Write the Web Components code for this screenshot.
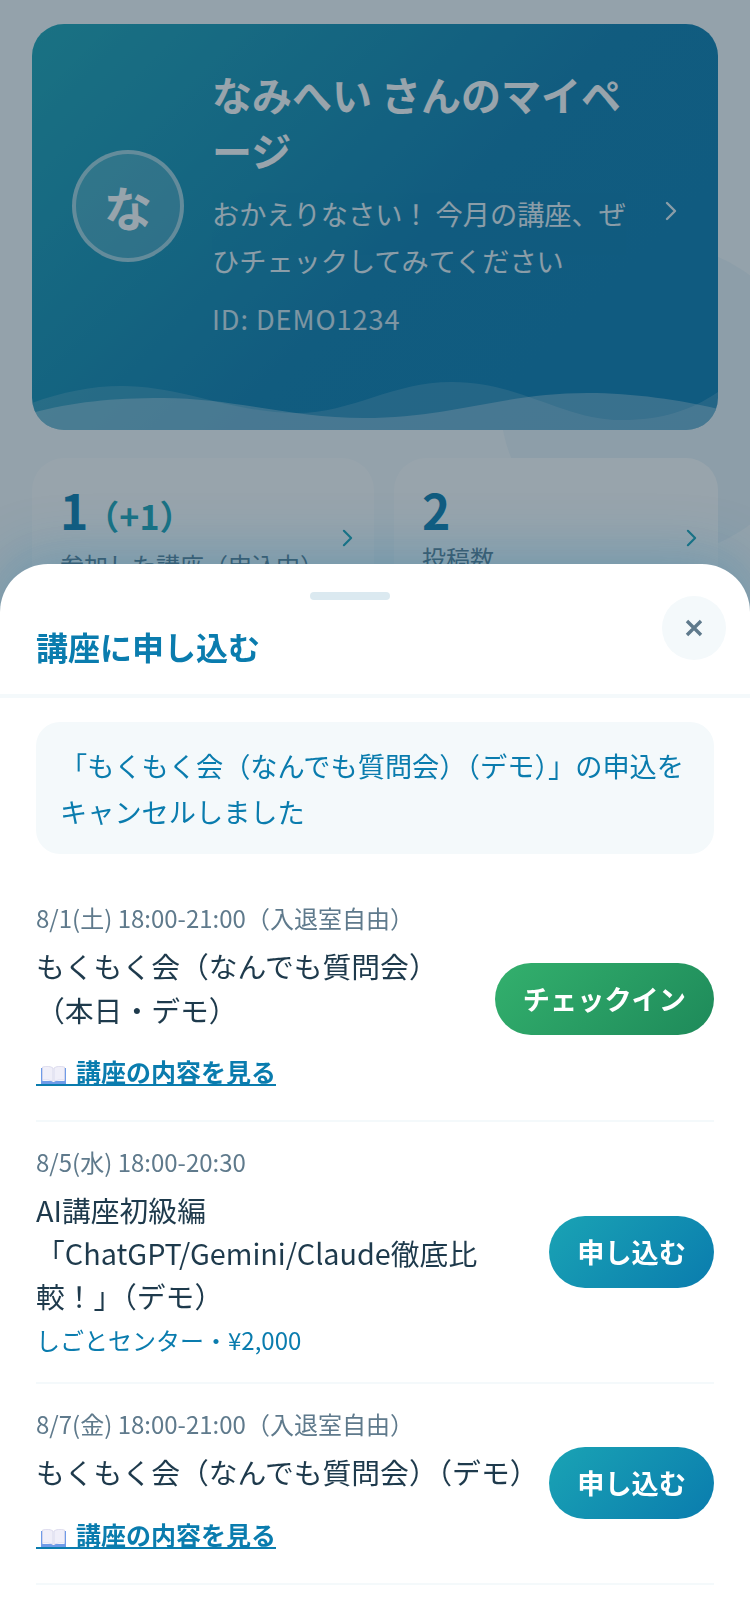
<!DOCTYPE html>
<html lang="ja">
<head>
<meta charset="utf-8">
<title>マイページ</title>
<style>
  html, body { margin: 0; height: 1624px; overflow: hidden; }
  body {
    background: #f7fbfd;
    color: #1e3a4c;
    font-family: "Noto Sans CJK JP", "Noto Sans", sans-serif;
  }
</style>
</head>
<body>
<my-page>
  <hero-card name="なみへい さんのマイページ" initial="な" userid="ID: DEMO1234">おかえりなさい！ 今月の講座、ぜひチェックしてみてください</hero-card>
  <stat-card value="1" extra="（+1）" label="参加した講座（申込中）"></stat-card>
  <stat-card value="2" label="投稿数"></stat-card>
</my-page>
<modal-sheet heading="講座に申し込む">
  <notice-box>「もくもく会（なんでも質問会）（デモ）」の申込をキャンセルしました</notice-box>
  <course-item date="8/1(土) 18:00-21:00（入退室自由）" name="もくもく会（なんでも質問会）（本日・デモ）" action="チェックイン" kind="checkin" link="講座の内容を見る"></course-item>
  <course-item date="8/5(水) 18:00-20:30" name="AI講座初級編「ChatGPT/Gemini/Claude徹底比較！」（デモ）" action="申し込む" venue="しごとセンター・¥2,000"></course-item>
  <course-item date="8/7(金) 18:00-21:00（入退室自由）" name="もくもく会（なんでも質問会）（デモ）" action="申し込む" link="講座の内容を見る"></course-item>
</modal-sheet>

<script>
const chevron = (w, h, sw) => `
  <svg width="${w}" height="${h}" viewBox="0 0 12 20" fill="none" stroke="currentColor" stroke-width="${sw}" stroke-linecap="round" stroke-linejoin="round"><path d="M2 2l8 8-8 8"/></svg>`;

class MyPage extends HTMLElement {
  constructor() {
    super();
    this.attachShadow({ mode: "open" });
    this.shadowRoot.innerHTML = `
      <style>
        :host { display: block; position: relative; height: 1624px; overflow: hidden; }
        .blob {
          position: absolute;
          left: 500px;
          top: 244px;
          width: 312px;
          height: 312px;
          border-radius: 50%;
          background: rgba(10, 124, 174, 0.05);
        }
        .content {
          position: relative;
          display: grid;
          grid-template-columns: 342px 324px;
          gap: 28px 20px;
          padding: 24px 32px;
        }
        ::slotted(hero-card) { grid-column: 1 / 3; }
      </style>
      <div class="blob"></div>
      <div class="content"><slot></slot></div>
    `;
  }
}
customElements.define("my-page", MyPage);

class HeroCard extends HTMLElement {
  constructor() {
    super();
    this.attachShadow({ mode: "open" });
  }

  connectedCallback() {
    this.shadowRoot.innerHTML = `
      <style>
        :host {
          display: block;
          position: relative;
          overflow: hidden;
          border-radius: 32px;
          background: linear-gradient(135deg, #1aa3b4, #0a7cae 55%, #087ab0);
          color: #fff;
        }
        .row {
          display: flex;
          align-items: center;
          padding: 42px 41px 84px 40px;
        }
        .avatar {
          flex: none;
          box-sizing: border-box;
          width: 112px;
          height: 112px;
          margin-right: 28px;
          display: flex;
          align-items: center;
          justify-content: center;
          border: 4px solid rgba(255, 255, 255, 0.5);
          border-radius: 50%;
          background: rgba(255, 255, 255, 0.2);
          font-size: 48px;
          font-weight: 700;
        }
        .text { flex: 1; min-width: 0; padding-bottom: 8px; }
        h1 { margin: 0; font-size: 40px; line-height: 56px; font-weight: 700; }
        p { margin: 12px 0 0; font-size: 27.2px; line-height: 46.6px; opacity: 0.9; }
        .id { margin-top: 16.2px; font-size: 27.2px; line-height: 39px; letter-spacing: 0.9px; opacity: 0.8; }
        .go { flex: none; width: 46px; display: flex; justify-content: flex-end; margin-top: 9px; opacity: 0.9; }
        .waves { position: absolute; left: 0; bottom: 0; display: block; }
      </style>
      <div class="row">
        <div class="avatar">${this.getAttribute("initial")}</div>
        <div class="text">
          <h1>${this.getAttribute("name")}</h1>
          <p><slot></slot></p>
          <div class="id">${this.getAttribute("userid")}</div>
        </div>
        <div class="go">${chevron(12, 20, 2.4)}</div>
      </div>
      <svg class="waves" width="686" height="60" viewBox="0 0 686 60">
        <path fill="rgba(255,255,255,0.15)" d="M0 33C30 22 60 16 90 16C150 16 200 43 265 43C320 43 360 12 420 12C490 12 530 50 590 50C630 50 660 40 686 22V60H0Z"/>
        <path fill="rgba(255,255,255,0.3)" d="M0 43C40 32 80 28 131 28C200 28 260 48 332 48C420 48 470 23 556 23C600 23 650 30 686 39V60H0Z"/>
      </svg>
    `;
  }
}
customElements.define("hero-card", HeroCard);

class StatCard extends HTMLElement {
  constructor() {
    super();
    this.attachShadow({ mode: "open" });
  }

  connectedCallback() {
    const extra = this.getAttribute("extra");
    this.shadowRoot.innerHTML = `
      <style>
        :host {
          display: flex;
          align-items: center;
          justify-content: space-between;
          height: 162px;
          padding: 19px 21px 0 28px;
          border-radius: 32px;
          background: #fff;
          box-sizing: border-box;
        }
        .left { align-self: flex-start; }
        .num { font-size: 48px; line-height: 64px; font-weight: 700; color: #0a7cae; }
        .num span { margin-left: -3px; font-size: 34px; color: #1aa3b4; }
        .label { margin-top: -1px; font-size: 24px; line-height: 36px; color: #5f7a8c; white-space: nowrap; }
        .go { color: #1aa3b4; display: flex; margin-top: -22px; }
      </style>
      <div class="left">
        <div class="num">${this.getAttribute("value")}${extra ? `<span>${extra}</span>` : ""}</div>
        <div class="label">${this.getAttribute("label")}</div>
      </div>
      <div class="go">${chevron(11, 18, 2.4)}</div>
    `;
  }
}
customElements.define("stat-card", StatCard);

class ModalSheet extends HTMLElement {
  constructor() {
    super();
    this.attachShadow({ mode: "open" });
  }

  connectedCallback() {
    this.shadowRoot.innerHTML = `
      <style>
        :host { display: block; position: fixed; inset: 0; background: rgba(26, 54, 71, 0.45); }
        .sheet {
          position: absolute;
          left: 0;
          right: 0;
          bottom: 0;
          height: 1060px;
          box-sizing: border-box;
          overflow: hidden;
          border-radius: 48px 48px 0 0;
          background: #fff;
          box-shadow: 0 -8px 60px rgba(10, 124, 174, 0.3);
        }
        .handle { width: 80px; height: 8px; margin: 28px 0 0 310px; border-radius: 4px; background: #dbe9f0; }
        header { height: 94px; padding: 0 36px; border-bottom: 4px solid #f4f9fb; display: flex; align-items: center; }
        h2 { margin: 0; font-size: 32px; line-height: 40px; font-weight: 700; color: #0a7cae; position: relative; top: -1px; }
        .close {
          position: absolute;
          top: 32px;
          right: 24px;
          width: 64px;
          height: 64px;
          display: flex;
          align-items: center;
          justify-content: center;
          border-radius: 50%;
          background: #f4f9fb;
          color: #5f7a8c;
        }
        .body { padding: 24px 36px 0; }
      </style>
      <div class="sheet">
        <div class="handle"></div>
        <header><h2>${this.getAttribute("heading")}</h2></header>
        <div class="close">
          <svg width="18" height="18" viewBox="0 0 18 18" fill="none" stroke="currentColor" stroke-width="3.4"><path d="M2 2l14 14M16 2L2 16"/></svg>
        </div>
        <div class="body"><slot></slot></div>
      </div>
    `;
  }
}
customElements.define("modal-sheet", ModalSheet);

class NoticeBox extends HTMLElement {
  constructor() {
    super();
    this.attachShadow({ mode: "open" });
    this.shadowRoot.innerHTML = `
      <style>
        :host {
          display: block;
          margin-bottom: 24px;
          padding: 20px 24px;
          border-radius: 24px;
          background: #f4f9fb;
          color: #0a7cae;
          font-size: 27.2px;
          line-height: 46.24px;
        }
      </style>
      <slot></slot>
    `;
  }
}
customElements.define("notice-box", NoticeBox);

class CourseItem extends HTMLElement {
  constructor() {
    super();
    this.attachShadow({ mode: "open" });
  }

  connectedCallback() {
    const link = this.getAttribute("link");
    const venue = this.getAttribute("venue");
    const checkin = this.getAttribute("kind") === "checkin";
    this.shadowRoot.innerHTML = `
      <style>
        :host {
          display: flex;
          align-items: center;
          gap: 16px;
          padding: 22px 0 23px;
          border-bottom: 2px solid #f4f9fb;
        }
        .info { flex: 1; min-width: 0; }
        .date { font-size: 24px; line-height: 36px; color: #5f7a8c; }
        .name { margin-top: 8px; font-size: 28.8px; line-height: 43.2px; color: #1e3a4c; }
        .venue { margin-top: 3px; font-size: 24px; line-height: 39px; color: #0a7cae; }
        .more { margin-top: 17px; height: 49px; display: flex; align-items: center; }
        a {
          display: inline-flex;
          align-items: flex-end;
          padding-left: 5px;
          border-bottom: 2px solid #0a7cae;
          color: #0a7cae;
          font-size: 25px;
          line-height: 26px;
          font-weight: 700;
          text-decoration: none;
        }
        a svg { display: block; margin-right: 10px; }
        button {
          flex: none;
          height: 72px;
          padding: 0 28px;
          border: 0;
          border-radius: 36px;
          font: 700 27.2px/1 "Noto Sans CJK JP", sans-serif;
          color: #fff;
          background: linear-gradient(135deg, #1aa3b4, #0a7cae);
        }
        button.checkin { background: linear-gradient(135deg, #33b06d, #1e8a5a); }
      </style>
      <div class="info">
        <div class="date">${this.getAttribute("date")}</div>
        <div class="name">${this.getAttribute("name")}</div>
        ${venue ? `<div class="venue">${venue}</div>` : ""}
        ${link ? `<div class="more"><a href="#"><svg width="25" height="18" viewBox="0 0 25 18"><path fill="#6f9be8" d="M0 2h1.500v13h10v1h2v-1h10V2H25v16H0z"/><path fill="#f0eff9" stroke="#cfcde6" stroke-width=".6" d="M1.500 1c4-1 8-1 10.500 1v13.500C9 14 5.500 13.500 1.500 14zM23.500 1c-4-1-8-1-10.500 1v13.500c3-1.500 6.500-2 10.500-1.500z"/></svg>${link}</a></div>` : ""}
      </div>
      <button class="${checkin ? "checkin" : ""}">${this.getAttribute("action")}</button>
    `;
  }
}
customElements.define("course-item", CourseItem);
</script>
</body>
</html>
